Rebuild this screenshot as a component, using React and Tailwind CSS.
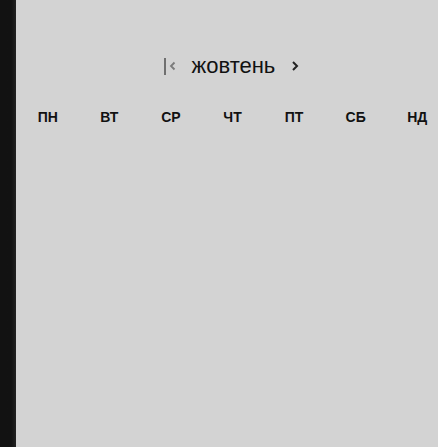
import React from "react"

const days = ["ПН", "ВТ", "СР", "ЧТ", "ПТ", "СБ", "НД"]

const App = () => {
  return (
    <div className="flex h-[447px] w-[438px] overflow-hidden bg-[#d3d3d3] font-['Liberation_Sans',Arial,sans-serif]">
      <div className="h-full w-[16px] shrink-0 bg-gradient-to-r from-[#121212] from-70% to-[#222222]" />
      <div className="flex flex-col">
        <div className="mt-[52px] flex h-[28px] items-center pl-[148px]">
          <div className="h-[17px] w-[1.5px] bg-[#6f6f6f]" />
          <svg width="10" height="12" viewBox="0 0 10 12" className="ml-[2px]">
            <path d="M6.5 2.5 L3 6 L6.5 9.5" fill="none" stroke="#7a7a7a" strokeWidth="1.8" />
          </svg>
          <span className="ml-[14px] text-[22px] leading-none text-[#111]">жовтень</span>
          <svg width="10" height="12" viewBox="0 0 10 12" className="ml-[15px]">
            <path d="M3 2 L7 6 L3 10" fill="none" stroke="#222" strokeWidth="2" />
          </svg>
        </div>
        <div className="mt-[27px] grid w-[432px] grid-cols-7 pl-[1px]">
          {days.map((d) => (
            <div key={d} className="text-center text-[14px] font-bold leading-[20px] text-[#111]">
              {d}
            </div>
          ))}
        </div>
      </div>
    </div>
  )
}

export default App
